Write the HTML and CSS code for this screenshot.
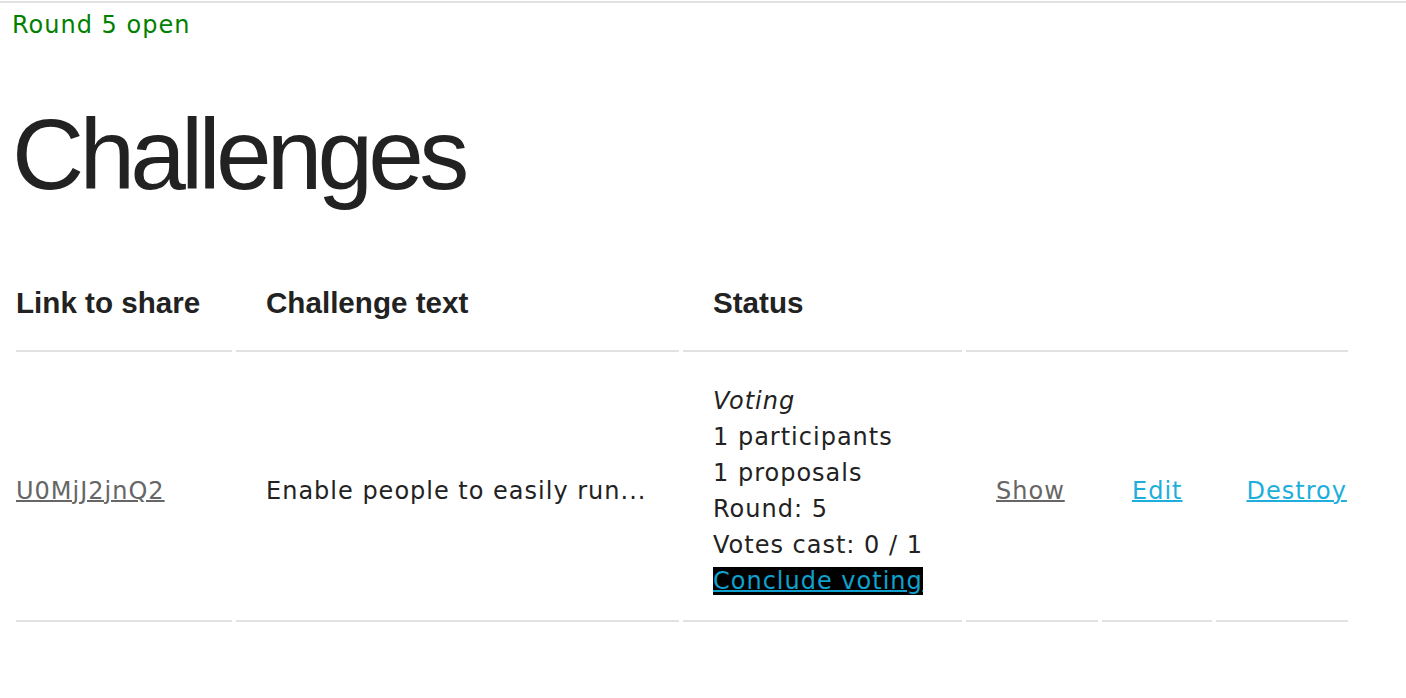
FILE: index.html
```html
<!DOCTYPE html>
<html lang="en">
<head>
<meta charset="utf-8">
<title>Challenges</title>
<link rel="stylesheet" href="styles.css">
</head>
<body>
<div class="topline"></div>
<main class="page">
  <p class="notice">Round 5 open</p>
  <h1 class="title">Challenges</h1>
  <table class="challenges">
    <thead>
      <tr>
        <th class="col-link">Link to share</th>
        <th class="col-text">Challenge text</th>
        <th class="col-status">Status</th>
        <th class="col-actions" colspan="3"></th>
      </tr>
    </thead>
    <tbody>
      <tr>
        <td class="c-link"><a class="link-muted" href="#">U0MjJ2jnQ2</a></td>
        <td class="c-text">Enable people to easily run...</td>
        <td class="c-status">
          <div class="status-line"><em>Voting</em></div>
          <div class="status-line">1 participants</div>
          <div class="status-line">1 proposals</div>
          <div class="status-line">Round: 5</div>
          <div class="status-line">Votes cast: 0 / 1</div>
          <div class="status-line"><a class="conclude" href="#">Conclude voting</a></div>
        </td>
        <td class="c-show"><a class="link-muted" href="#">Show</a></td>
        <td class="c-edit"><a class="link" href="#">Edit</a></td>
        <td class="c-destroy"><a class="link" href="#">Destroy</a></td>
      </tr>
    </tbody>
  </table>
</main>
</body>
</html>
```

FILE: styles.css
```css
html, body {
  margin: 0;
  padding: 0;
  background: #ffffff;
}

body {
  font-family: "DejaVu Sans", Verdana, sans-serif;
  font-size: 24px;
  line-height: 36px;
  letter-spacing: 1px;
  color: #222222;
}

.topline {
  margin-top: 1px;
  height: 2px;
  background: #e1e1e1;
}

.page {
  padding: 0 12px;
}

.notice {
  margin: 4px 0 0 0;
  color: #008000;
  line-height: 36px;
}

.title {
  margin: 51px 0 38px 0;
  font-family: "Liberation Sans", Arial, Helvetica, sans-serif;
  font-weight: normal;
  font-size: 100px;
  line-height: 120px;
  letter-spacing: -4.8px;
  color: #222222;
}

.challenges {
  border-collapse: separate;
  border-spacing: 4px;
  margin-left: 0;
}

.challenges th,
.challenges td {
  text-align: left;
  padding: 24px 30px;
  border-bottom: 2px solid #e1e1e1;
  white-space: nowrap;
}

.challenges th {
  font-family: "Liberation Sans", Arial, Helvetica, sans-serif;
  font-weight: bold;
  font-size: 29.6px;
  line-height: 46px;
  letter-spacing: 0;
  color: #222222;
}

.challenges td {
  padding-top: 27px;
  padding-bottom: 21px;
  vertical-align: middle;
}

.challenges th:first-child,
.challenges td:first-child {
  padding-left: 0;
}

.challenges th:last-child,
.challenges td:last-child {
  padding-right: 0;
}

.c-link { width: 186px; }
.c-text { width: 383px; }
.c-status { width: 219px; }
.c-show { width: 72px; }
.c-edit { width: 50px; }
.c-destroy { width: 102px; }

.status-line {
  line-height: 36px;
}

.status-line em {
  font-style: italic;
}

.link-muted {
  color: #666666;
  text-decoration: underline;
  text-decoration-thickness: 2px;
}

.link {
  color: #1eaedb;
  text-decoration: underline;
  text-decoration-thickness: 2px;
}

.conclude {
  color: #0fa0ce;
  background: #000000;
  text-decoration: underline;
  text-decoration-thickness: 2px;
}
```
